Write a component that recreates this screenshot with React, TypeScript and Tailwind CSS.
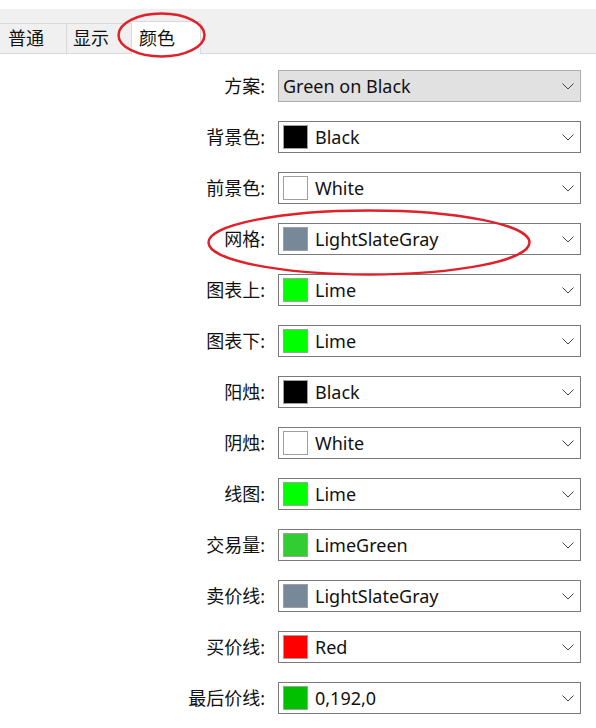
import { ChevronDown } from 'lucide-react';

const rows = [
  { label: '背景色:', color: '#000000', name: 'Black' },
  { label: '前景色:', color: '#ffffff', name: 'White' },
  { label: '网格:', color: '#778899', name: 'LightSlateGray' },
  { label: '图表上:', color: '#00ff00', name: 'Lime' },
  { label: '图表下:', color: '#00ff00', name: 'Lime' },
  { label: '阳烛:', color: '#000000', name: 'Black' },
  { label: '阴烛:', color: '#ffffff', name: 'White' },
  { label: '线图:', color: '#00ff00', name: 'Lime' },
  { label: '交易量:', color: '#32cd32', name: 'LimeGreen' },
  { label: '卖价线:', color: '#778899', name: 'LightSlateGray' },
  { label: '买价线:', color: '#ff0000', name: 'Red' },
  { label: '最后价线:', color: '#00c000', name: '0,192,0' },
];

const font = { fontFamily: '"Noto Sans", "Noto Sans CJK SC", sans-serif' };

const Chevron = () => (
  <svg width="12" height="7" viewBox="0 0 12 7" className="mr-[6px] shrink-0">
    <path d="M0.5 0.5 L6 6 L11.5 0.5" fill="none" stroke="#444" strokeWidth="1" />
  </svg>
);

const Row = ({ label, children, disabled }: { label: string; children: React.ReactNode; disabled?: boolean }) => (
  <div className="flex items-center h-[32px]">
    <div className="w-[266px] pr-[1px] text-right text-[18px] text-[#111]">{label}</div>
    <div
      className={`ml-[12px] flex h-[32px] w-[303px] items-center justify-between border ${
        disabled ? 'border-[#adadad] bg-[#e1e1e1]' : 'border-[#7a7a7a] bg-white'
      }`}
    >
      {children}
      <Chevron />
    </div>
  </div>
);

export default function App() {
  return (
    <div className="relative h-[728px] w-[596px] overflow-hidden bg-white" style={font}>
      <div className="h-[9px] bg-white" />
      <div className="flex h-[45px] items-end border-b border-[#d9d9d9] bg-[#f0f0f0]">
        <div className="flex h-[30px] w-[67px] items-center border-r border-t border-[#d9d9d9] pl-[8px] text-[18px] text-[#111]">
          普通
        </div>
        <div className="flex h-[30px] w-[65px] items-center border-r border-t border-[#d9d9d9] pl-[6px] text-[18px] text-[#111]">
          显示
        </div>
        <div className="-mb-px flex h-[33px] w-[69px] items-center border-r border-t border-[#d9d9d9] bg-white pl-[7px] text-[18px] text-[#111]">
          颜色
        </div>
      </div>

      <div className="flex flex-col gap-[19px] pt-[16px]">
        <Row label="方案:" disabled>
          <span className="pl-[4px] text-[18px] text-[#111]">Green on Black</span>
        </Row>
        {rows.map((r, i) => (
          <Row key={i} label={r.label}>
            <div className="flex items-center">
              <div className="ml-[4px] h-[24px] w-[25px] border border-[#a0a0a0]" style={{ backgroundColor: r.color }} />
              <span className="ml-[7px] text-[18px] text-[#111]">{r.name}</span>
            </div>
          </Row>
        ))}
      </div>

      <svg className="pointer-events-none absolute left-0 top-0" width="596" height="728">
        <ellipse cx="161.5" cy="35" rx="43" ry="21.5" fill="none" stroke="#e0202a" strokeWidth="2.5" />
        <ellipse cx="369" cy="242.5" rx="160.5" ry="32" fill="none" stroke="#e0202a" strokeWidth="2.5" />
      </svg>
    </div>
  );
}
